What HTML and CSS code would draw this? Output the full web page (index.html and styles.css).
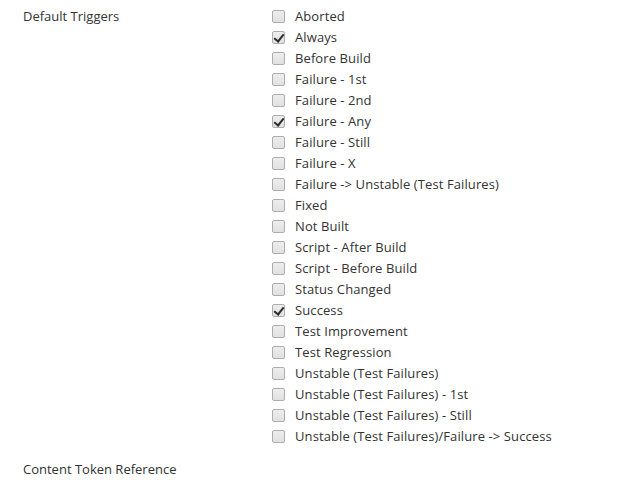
FILE: index.html
```html
<!DOCTYPE html>
<html lang="en">
<head>
    <meta charset="UTF-8">
    <title>Default Triggers</title>
    <link rel="stylesheet" href="styles.css">
</head>
<body>
    <div class="setting">
        <div class="name">Default Triggers</div>
        <div class="value">
            <label class="opt"><span class="box"></span>Aborted</label>
            <label class="opt"><span class="box on"></span>Always</label>
            <label class="opt"><span class="box"></span>Before Build</label>
            <label class="opt"><span class="box"></span>Failure - 1st</label>
            <label class="opt"><span class="box"></span>Failure - 2nd</label>
            <label class="opt"><span class="box on"></span>Failure - Any</label>
            <label class="opt"><span class="box"></span>Failure - Still</label>
            <label class="opt"><span class="box"></span>Failure - X</label>
            <label class="opt"><span class="box"></span>Failure -&gt; Unstable (Test Failures)</label>
            <label class="opt"><span class="box"></span>Fixed</label>
            <label class="opt"><span class="box"></span>Not Built</label>
            <label class="opt"><span class="box"></span>Script - After Build</label>
            <label class="opt"><span class="box"></span>Script - Before Build</label>
            <label class="opt"><span class="box"></span>Status Changed</label>
            <label class="opt"><span class="box on"></span>Success</label>
            <label class="opt"><span class="box"></span>Test Improvement</label>
            <label class="opt"><span class="box"></span>Test Regression</label>
            <label class="opt"><span class="box"></span>Unstable (Test Failures)</label>
            <label class="opt"><span class="box"></span>Unstable (Test Failures) - 1st</label>
            <label class="opt"><span class="box"></span>Unstable (Test Failures) - Still</label>
            <label class="opt"><span class="box"></span>Unstable (Test Failures)/Failure -&gt; Success</label>
        </div>
    </div>
    <div class="setting">
        <div class="name">Content Token Reference</div>
    </div>
</body>
</html>
```

FILE: styles.css
```css
* {margin: 0; padding: 0; box-sizing: border-box;}
body {font-family: "Open Sans", "Noto Sans", sans-serif; font-size: 13px; color: #333; background: #fff; padding: 6px 0 0 23px;}
.setting {display: flex;}
.setting .name {width: 249px; line-height: 21px;}
.setting .value {display: flex; flex-direction: column; padding-bottom: 12px;}
.opt {display: flex; align-items: center; height: 21px; line-height: 21px; white-space: nowrap; letter-spacing: 0.1px;}
.box {
    width: 13px; height: 13px; margin-right: 10px; border: 1px solid #adadad; border-radius: 2px;
    background: linear-gradient(#ededed, #e1e1e1); position: relative;
}
.box.on::after {
    content: ""; position: absolute; left: 3px; top: 0px; width: 4px; height: 8px;
    border: solid #2b2b2b; border-width: 0 2.5px 2.5px 0; transform: rotate(38deg);
}
```
